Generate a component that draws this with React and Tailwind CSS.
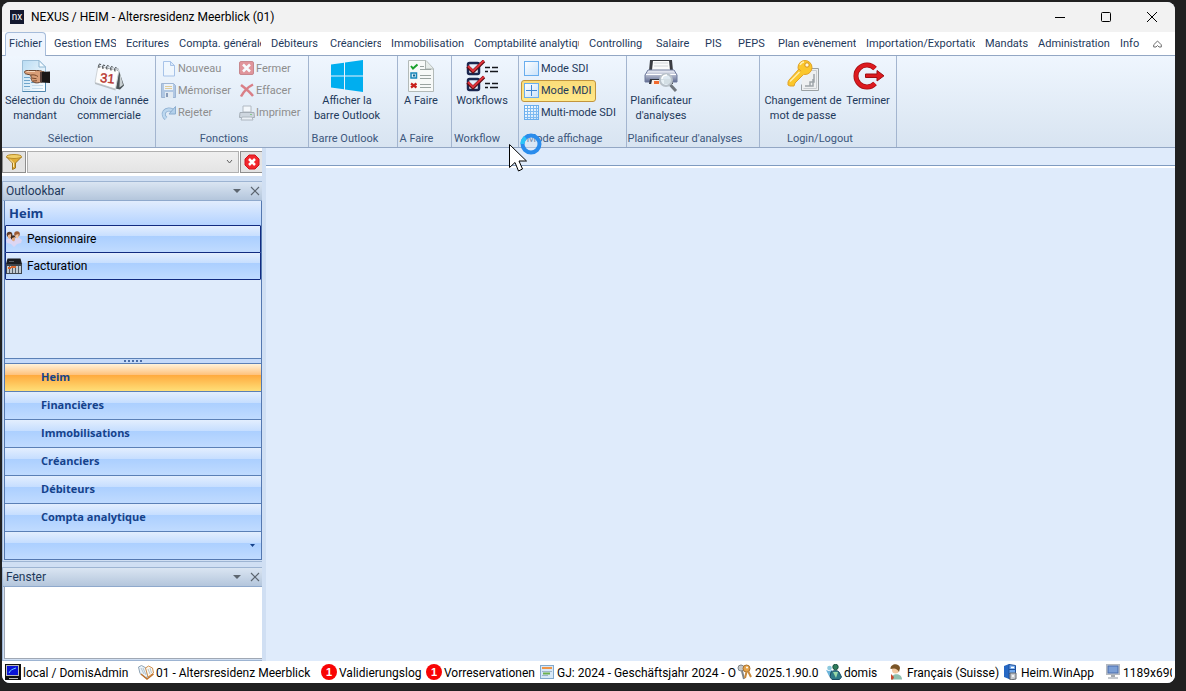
import React, { useState } from "react";
import clsx from "clsx";

const tabs = [
  { name: "Gestion EMS", width: "w-[72px]" },
  { name: "Ecritures", width: "w-[53px]" },
  { name: "Compta. générale", width: "w-[92px]" },
  { name: "Débiteurs", width: "w-[59px]" },
  { name: "Créanciers", width: "w-[61px]" },
  { name: "Immobilisations", width: "w-[83px]" },
  { name: "Comptabilité analytique", width: "w-[115px]" },
  { name: "Controlling", width: "w-[67px]" },
  { name: "Salaire", width: "w-[49px]" },
  { name: "PIS", width: "w-[33px]" },
  { name: "PEPS", width: "w-[40px]" },
  { name: "Plan evènement", width: "w-[88px]" },
  { name: "Importation/Exportation", width: "w-[119px]" },
  { name: "Mandats", width: "w-[53px]" },
  { name: "Administration", width: "w-[82px]" },
  { name: "Info", width: "w-[37px]" },
];

const navItems = [
  "Heim",
  "Financières",
  "Immobilisations",
  "Créanciers",
  "Débiteurs",
  "Compta analytique",
];

/* ---------- large ribbon icons ---------- */

function SelectClientIcon() {
  return (
    <svg width="32" height="32" viewBox="0 0 32 32">
      <defs>
        <linearGradient id="sheet" x1="0" y1="0" x2="1" y2="1">
          <stop offset="0" stopColor="#b9dcf3" />
          <stop offset="1" stopColor="#ffffff" />
        </linearGradient>
      </defs>
      <path d="M3.500 .5H20l6.500 6.500v24.500h-23z" fill="url(#sheet)" stroke="#9dbfd8" />
      <path d="M20 .5V7h6.500z" fill="#f4fbff" stroke="#8fb6d2" />
      <path d="M26.500 22v9.500h-23" fill="none" stroke="#4e86ad" />
      <path d="M5 17.500h6M5 20.500h6M5 23.500h6M5 26.500h6M12 22.500h8" stroke="#6ea5cc" />
      <path d="M13 25.500h11M13 28.500h11M5 29.500h6" stroke="#c5dcec" />
      <path d="M5.500 12c0-1.300 2-1.500 4-1.500h8c2 0 4 0 6 1l2 .5v9l-5 1.500c-2 .7-5 .5-6-.5-1.500 0-2-1-1.500-2-1-.6-1.300-1.500-.8-2.500l-.5-2.500-4.500-1c-1 0-1.700-1-1.700-2z" fill="#d99e78" stroke="#6b4630" />
      <path d="M12 15c3-.5 5 .2 7 1.500M12.500 18l5 .7M14 21l4-.3" stroke="#7a4a2c" fill="none" />
      <path d="M7.500 11.500H16" stroke="#f7d5ba" />
      <path d="M22 12l9 -.5V23l-9-.5z" fill="#1a1716" />
      <path d="M22 12v10" stroke="#5a413a" strokeWidth="2" />
    </svg>
  );
}

function CalendarIcon() {
  return (
    <svg width="32" height="32" viewBox="0 0 32 32">
      <path d="M25 8l6 17.500-4 4-4.500-1z" fill="#4a5356" />
      <path d="M27 13l3 12-3.500 2.500z" fill="#c9d0d3" />
      <path d="M5 6l21 4-3.500 19L2 22.500z" fill="#fdfdfd" stroke="#cfd4d8" />
      <path d="M2 22.500l20.500 6.500v1.500L2 24z" fill="#b7bdc2" />
      <path d="M6 6.500l19 4" stroke="#a0a5aa" strokeDasharray="2 1" />
      <path d="M6 8c-1-4 1-5 2-3M10 9c-1-4 1-5 2-3M14 9.500c-1-4 1-5 2-3M18 10.500c-1-4 1-5 2-3M22 11.500c-1-4 1-5 2-3" fill="none" stroke="#33383b" />
      <text x="7" y="22" transform="rotate(6 8 20)" className="font-['Liberation_Sans'] text-[13px]" fill="#b8322a" stroke="#b8322a" strokeWidth=".4">31</text>
    </svg>
  );
}

function WindowsIcon() {
  return (
    <svg width="32" height="32" viewBox="0 0 32 32" fill="#00aeef">
      <path d="M0 4.500L13 2.700V15.500H0zM14 2.500L32 0V15.500H14zM0 16.500H13V29.300L0 27.500zM14 16.500H32V32L14 29.500z" />
    </svg>
  );
}

function TodoIcon() {
  return (
    <svg width="32" height="32" viewBox="0 0 32 32">
      <path d="M3.500 .5H21l7.500 8v23h-25z" fill="#f7f9f8" stroke="#b3bab8" />
      <path d="M20.500 1v8h8" fill="#e6ecea" stroke="#aab2b0" />
      <path d="M6 6l2 2.500 4.500-4" fill="none" stroke="#1ba12c" strokeWidth="2" />
      <rect x="6" y="13" width="5.500" height="5" fill="#d8eefb" stroke="#1a87b9" strokeWidth="1.500" />
      <path d="M8 15.500h2" stroke="#14648c" strokeWidth="2" />
      <path d="M6 23.500l5.500 4M11.500 23.500L6 27.500" stroke="#c8201c" strokeWidth="2.200" />
      <path d="M15 6.500h4M15 9.500h11M15 15.500h11M15 18.500h11M15 24.500h11M15 27.500h11" stroke="#9aa3a0" />
    </svg>
  );
}

function WorkflowIcon() {
  return (
    <svg width="32" height="32" viewBox="0 0 32 32">
      {[0, 16].map((y) => (
        <g key={y} transform={`translate(0 ${y})`}>
          <rect x="2" y="3" width="11" height="11" rx="1.500" fill="#e7edf8" stroke="#1b2750" strokeWidth="2.500" />
          <path d="M1.500 6.500l5.500 5L18 1" fill="none" stroke="#5b0d12" strokeWidth="3.500" />
          <path d="M2 6l5 5L18 .5" fill="none" stroke="#e0333b" strokeWidth="2" />
          <path d="M19 7.500h5M26 7.500h6M19 11.500h3M24 11.500h8" stroke="#15171c" strokeWidth="1.500" />
        </g>
      ))}
    </svg>
  );
}

function PrinterSearchIcon() {
  return (
    <svg width="34" height="32" viewBox="0 0 34 32">
      <defs>
        <linearGradient id="printer" x1="0" y1="0" x2="0" y2="1">
          <stop offset="0" stopColor="#f2f4fb" />
          <stop offset="1" stopColor="#5f6b91" />
        </linearGradient>
      </defs>
      <path d="M6 0h22l1 11H5z" fill="#3b3d43" />
      <path d="M9 1h16l1 9H8z" fill="#fbfbfb" />
      <path d="M10 3h14M10 6h14" stroke="#d3d6da" />
      <path d="M4 10h26l3 5v7H1v-7z" fill="url(#printer)" stroke="#6f7a9c" />
      <path d="M2 14.500h30" stroke="#ffffff" />
      <path d="M6 19h22l1 5H5z" fill="#2f323b" />
      <path d="M8 20h12v5H7z" fill="#f7f0ea" />
      <path d="M10 21h5v3h-5z" fill="#f26a2e" />
      <circle cx="22" cy="20" r="6" fill="#e6f1f7" fillOpacity=".9" stroke="#b8c1c9" strokeWidth="2" />
      <path d="M18 19c0-3 3-4 5-4" fill="none" stroke="#ffffff" strokeWidth="1.500" />
      <path d="M26.500 25l5.500 6" stroke="#70767d" strokeWidth="3" />
    </svg>
  );
}

function KeyIcon() {
  return (
    <svg width="32" height="32" viewBox="0 0 32 32">
      <path d="M15.500 8.500h16v22h-17v-6" fill="#eef0f1" stroke="#9aa0a3" />
      <path d="M17.500 10.500h12v18h-13" fill="none" stroke="#c9cdd0" />
      <path d="M27 14v8h-4v4M18 26h8v-7" fill="none" stroke="#9ea4a8" strokeWidth="1.500" />
      <circle cx="18" cy="7.500" r="7" fill="#fbc72b" stroke="#e0a22a" />
      <circle cx="20" cy="5" r="2.200" fill="#fff8dd" stroke="#d8930e" />
      <path d="M12 9l5 5L8 23l-1 3H3l-2-1v-3l1-2z" fill="#fbc72b" stroke="#e0a22a" />
      <path d="M13 12l4 2" stroke="#fbc72b" strokeWidth="3" />
      <path d="M12.500 12L3 21.500M13 5c1-2 2-3 4-3" fill="none" stroke="#ffefae" strokeWidth="1.500" />
    </svg>
  );
}

function ExitIcon() {
  return (
    <svg width="32" height="32" viewBox="0 0 32 32">
      <path d="M23 8.500A11 11 0 1 0 23 23.500" fill="none" stroke="#a30f13" strokeWidth="5" />
      <path d="M23 8.500A11 11 0 1 0 23 23.500" fill="none" stroke="#dc1a1f" strokeWidth="3.500" />
      <path d="M13.500 14H25v-3.500l7 5.300-7 5.200v-3.500H13.500z" fill="#dc1a1f" stroke="#9c0f12" />
    </svg>
  );
}

/* ---------- small ribbon icons ---------- */

function NewIcon() {
  return (
    <svg width="16" height="16" viewBox="0 0 16 16" opacity=".6">
      <path d="M2.500 .5h7l4 4v10.500h-11z" fill="#f3f9ff" stroke="#7ba4dc" />
      <path d="M9.500 .5v4h4z" fill="#cfe2f8" stroke="#7ba4dc" />
    </svg>
  );
}

function SaveIcon() {
  return (
    <svg width="16" height="16" viewBox="0 0 16 16" opacity=".6">
      <path d="M.5 .5h12l2 2v12H.5z" fill="#8eaed6" stroke="#6f8fbc" />
      <rect x="3" y="1" width="9" height="6" fill="#eef4fb" />
      <path d="M4 3.500h7M4 5.500h7" stroke="#d9b45b" />
      <rect x="4" y="9" width="8" height="6" fill="#e2e8ef" />
      <rect x="5" y="10" width="2" height="4" fill="#4c6590" />
    </svg>
  );
}

function UndoIcon() {
  return (
    <svg width="16" height="16" viewBox="0 0 16 16" opacity=".65">
      <path d="M5 13.500C0 9 4 2 12 5.500" fill="none" stroke="#5e8cbb" strokeWidth="4" />
      <path d="M5 13.500C0 9 4 2 12 5.500" fill="none" stroke="#a9cdec" strokeWidth="2.500" />
      <path d="M14.500 1.500v7.500H8z" fill="#9bc3e6" stroke="#5e8cbb" />
    </svg>
  );
}

function CloseSmallIcon() {
  return (
    <svg width="16" height="16" viewBox="0 0 16 16" opacity=".6">
      <rect x=".5" y=".5" width="14" height="13" rx="1.500" fill="#d9575c" stroke="#b04146" />
      <path d="M4 3.500l7 7M11 3.500l-7 7" stroke="#ffffff" strokeWidth="2.500" />
    </svg>
  );
}

function DeleteIcon() {
  return (
    <svg width="16" height="16" viewBox="0 0 16 16" opacity=".6">
      <path d="M2 2c4 3 8 6 12 11M14 1.500C9 4 5 8 2 13.500" fill="none" stroke="#d2353c" strokeWidth="2.500" />
    </svg>
  );
}

function PrintIcon() {
  return (
    <svg width="16" height="16" viewBox="0 0 16 16" opacity=".6">
      <path d="M4 1h8v6H4z" fill="#ffffff" stroke="#9299a0" />
      <path d="M1 7.500h14l.5 5H.5z" fill="#c3c9d0" stroke="#7e858c" />
      <path d="M3 12h10l1 3H2z" fill="#f4f6f8" stroke="#8f969d" />
      <path d="M11 9.500h2" stroke="#50b34a" />
    </svg>
  );
}

function ModeIcon({ lines }) {
  return (
    <svg width="16" height="16" viewBox="0 0 16 16">
      <defs>
        <linearGradient id="pane" x1="0" y1="0" x2="1" y2="1">
          <stop offset="0" stopColor="#ffffff" />
          <stop offset="1" stopColor="#c9e2fa" />
        </linearGradient>
      </defs>
      <rect x=".5" y=".5" width="14" height="14" fill="url(#pane)" stroke="#6aaeee" />
      {lines === 1 && <path d="M7.500 2v11M2 7.500h11" stroke="#3f86d2" />}
      {lines === 3 && (
        <path d="M3.500 1v13M6.500 1v13M9.500 1v13M12.500 1v13M1 3.500h13M1 6.500h13M1 9.500h13M1 12.500h13" stroke="#7db9f0" />
      )}
    </svg>
  );
}

/* ---------- side bar and status icons ---------- */

function FunnelIcon() {
  return (
    <svg width="16" height="16" viewBox="0 0 16 16">
      <path d="M.5 3l6 6v6.500l3-1.500V9l6-6z" fill="#e0ac35" stroke="#9c7420" />
      <ellipse cx="8" cy="2.500" rx="7.500" ry="2" fill="#f0cf6a" stroke="#b88c2a" />
      <path d="M4 5.500l3.500 3.500v4" fill="none" stroke="#fbe9ae" />
    </svg>
  );
}

function CancelIcon() {
  return (
    <svg width="16" height="16" viewBox="0 0 16 16">
      <path d="M5 1h6l4 4v6l-4 4H5l-4-4V5z" fill="#f2262c" stroke="#d3121a" />
      <path d="M5 5l6 6M11 5l-6 6" stroke="#ffffff" strokeWidth="2.500" />
    </svg>
  );
}

function ResidentsIcon() {
  return (
    <svg width="16" height="16" viewBox="0 0 16 16">
      <path d="M0 9l3-2 5 1 4-2 4 3-1 3-4 1-3 3-3-3-4-1z" fill="#dcd6f3" />
      <circle cx="3.500" cy="3.500" r="2.800" fill="#5f3b27" />
      <path d="M2 4l3-1v3l-1 2-2-1z" fill="#e9b48d" />
      <circle cx="11" cy="3" r="2.800" fill="#9c5b34" />
      <path d="M9.500 4l3-1v3l-1 1.500-2-1z" fill="#f3c6a0" />
      <circle cx="7" cy="6.500" r="2.300" fill="#3f2a1f" />
      <path d="M6 7l3-1v3l-1 1.500-2-1z" fill="#e0a981" />
    </svg>
  );
}

function BillingIcon() {
  return (
    <svg width="16" height="16" viewBox="0 0 16 16">
      <path d="M1.500 .5h13L16 6H0z" fill="#1c1d20" />
      <path d="M3 3.500h5" stroke="#5c6066" />
      <path d="M0 6h16v10H0z" fill="#3f464d" />
      <path d="M1 8h14v7H1z" fill="#c3cbd1" />
      <path d="M3.500 8v7M6.500 8v7M9.500 8v7M12.500 8v7" stroke="#56606a" />
      <path d="M2 10h3M5 9h3M8 9h2" stroke="#d8662d" strokeWidth="2" />
    </svg>
  );
}

function TerminalIcon() {
  return (
    <svg width="16" height="16" viewBox="0 0 16 16">
      <rect width="16" height="16" fill="#111111" />
      <rect x="1" y="1" width="13" height="11" fill="#b9b9b9" />
      <rect x="2" y="2" width="11" height="9" fill="#0a14d6" />
      <path d="M4 9c1-3 4-4 7-5" stroke="#6fd0ff" fill="none" />
      <path d="M4 14.500h9" stroke="#c0c0c0" />
    </svg>
  );
}

function BookIcon() {
  return (
    <svg width="16" height="16" viewBox="0 0 16 16">
      <path d="M.5 3l3-1.500L8 4l2 9-3 .5-5-4z" fill="#eaf2f8" stroke="#8ea3b4" />
      <path d="M7.500 4l3-2 4 2 1 5-5.500 4z" fill="#fdf7ec" stroke="#cf9050" />
      <path d="M3 10l6 5 6.500-5" fill="none" stroke="#bf742f" strokeWidth="1.500" />
      <path d="M3 4l3 6M5 4l3 7M10 5l2 5M12 4l1.500 5" stroke="#b5c4cf" />
    </svg>
  );
}

function AlertBadge() {
  return (
    <svg width="16" height="16" viewBox="0 0 16 16">
      <circle cx="8" cy="8" r="8" fill="#f80404" />
      <text x="8" y="12" textAnchor="middle" className="font-['Liberation_Sans'] text-[11px] font-bold" fill="#ffffff">1</text>
    </svg>
  );
}

function FormIcon() {
  return (
    <svg width="16" height="16" viewBox="0 0 16 16">
      <rect x="1.500" y="1.500" width="13" height="13" fill="#d7e8f7" stroke="#83a9cc" />
      <path d="M3 4h10" stroke="#ef9548" strokeWidth="2" />
      <path d="M3 7.500h10M3 11.500h6" stroke="#9db5cb" />
      <path d="M4 9.500h7" stroke="#6cb04e" strokeWidth="2" />
    </svg>
  );
}

function KeysIcon() {
  return (
    <svg width="16" height="16" viewBox="0 0 16 16">
      <circle cx="4" cy="4" r="3" fill="#c3c7ca" stroke="#7f8488" />
      <path d="M5 7l2 8" stroke="#7f8488" strokeWidth="2" />
      <circle cx="9.500" cy="4.500" r="3.500" fill="#e6a44a" stroke="#a87333" />
      <path d="M9.500 8L8 14M11 7l3 6" stroke="#c98a3c" strokeWidth="2" />
      <circle cx="10" cy="3.500" r="1" fill="#fff" />
    </svg>
  );
}

function BuddiesIcon() {
  return (
    <svg width="16" height="16" viewBox="0 0 16 16">
      <circle cx="3.500" cy="4" r="2.300" fill="#8cc9de" />
      <path d="M0 6l3 1 3-1v7l-3-1z" fill="#6cb4da" />
      <circle cx="9.500" cy="3" r="2.700" fill="#2f7d5c" stroke="#1b5140" />
      <path d="M5 8c3-2 6-2 8 0l2.500 5-2 2.500H6L4 13z" fill="#2f7a86" stroke="#1c4c63" />
      <path d="M7 8l3 6 2-6" fill="#9ad9a8" />
    </svg>
  );
}

function PersonIcon() {
  return (
    <svg width="16" height="16" viewBox="0 0 16 16">
      <path d="M2 15.500c0-7 11-7 11 0z" fill="#8fbfae" />
      <circle cx="6.500" cy="6" r="3.500" fill="#f3c9a0" />
      <path d="M1.500 5c0-6 9-6 9.500-1l-1 4c-1-2-3-3.500-5-3.500z" fill="#7a5527" />
      <path d="M2 10l3 3-1 2.500H2z" fill="#ca4a2e" />
    </svg>
  );
}

function CabinetIcon() {
  return (
    <svg width="16" height="16" viewBox="0 0 16 16">
      <path d="M1 2l5-2v15l-5-2z" fill="#2668c4" />
      <path d="M6 .5l6.500 1V13L6 14.500z" fill="#6da6ec" stroke="#1c4f9b" />
      <path d="M6 5.500h6M6 9.500h4" stroke="#1c4f9b" />
      <path d="M7 9h6v6l-6 1z" fill="#c6cacf" stroke="#62676d" />
      <path d="M8 3.500h3M9 12h2" stroke="#ffffff" strokeWidth="1.500" />
    </svg>
  );
}

function MonitorIcon() {
  return (
    <svg width="16" height="16" viewBox="0 0 16 16">
      <rect x="1.500" y=".5" width="13" height="10" fill="#cdd1d6" stroke="#b4b9bf" />
      <rect x="3" y="2" width="10" height="7" fill="#7b9fd6" stroke="#4a6dab" />
      <path d="M6 11h4v2H6z" fill="#a5aab0" />
      <path d="M3 14h10" stroke="#c5c9ce" strokeWidth="2" />
    </svg>
  );
}

const statusItems = [
  { text: "local / DomisAdmin", icon: <TerminalIcon />, width: "w-[133px]" },
  { text: "01 - Altersresidenz Meerblick", icon: <BookIcon />, width: "w-[183px]" },
  { text: "Validierungslog", icon: <AlertBadge />, width: "w-[105px]" },
  { text: "Vorreservationen", icon: <AlertBadge />, width: "w-[113px]" },
  { text: "GJ: 2024 - Geschäftsjahr 2024 - O", icon: <FormIcon />, width: "w-[198px]" },
  { text: "2025.1.90.0", icon: <KeysIcon />, width: "w-[89px]" },
  { text: "domis", icon: <BuddiesIcon />, width: "w-[63px]" },
  { text: "Français (Suisse)", icon: <PersonIcon />, width: "w-[114px]" },
  { text: "Heim.WinApp", icon: <CabinetIcon />, width: "w-[102px]" },
  { text: "1189x690", icon: <MonitorIcon />, width: "w-[67px]" },
];

/* ---------- building blocks ---------- */

function RibbonGroup({ title, width, children }) {
  return (
    <section className={clsx("flex shrink-0 flex-col border-r border-[#a3b5cf] pt-[2px]", width)}>
      <div className="flex h-[73px] items-start">{children}</div>
      <h2 className="pr-4 text-center leading-4 whitespace-nowrap text-[#3b567c]">{title}</h2>
    </section>
  );
}

function BigButton({ icon, lines, width }) {
  return (
    <button className={clsx("flex shrink-0 flex-col items-center pt-[2px] leading-[15px] whitespace-nowrap", width)}>
      <span className="mb-[1px] flex h-8 items-center">{icon}</span>
      {lines.map((line) => (
        <span key={line}>{line}</span>
      ))}
    </button>
  );
}

function SmallButton({ icon, text, disabled }) {
  return (
    <button disabled={disabled} className="flex h-[22px] items-center gap-[1px] whitespace-nowrap disabled:text-[#8d8d8d]">
      {icon}
      {text}
    </button>
  );
}

function ModeButton({ lines, text, active, onClick }) {
  return (
    <button
      onClick={onClick}
      className={clsx(
        "flex h-[22px] items-center gap-[1px] rounded-[3px] border pr-1 pl-[2px] whitespace-nowrap",
        active ? "border-[#c2953d] bg-linear-to-b from-[#fbdc79] to-[#ffe98a]" : "border-transparent"
      )}
    >
      <ModeIcon lines={lines} />
      {text}
    </button>
  );
}

function PanelHeader({ title }) {
  return (
    <header className="flex h-[19px] shrink-0 items-center border-b border-[#8fa9cc] bg-linear-to-b from-[#dae5f2] to-[#b4c6dc] pl-[3px] text-[12px] text-[#1e395b]">
      <h2 className="flex-1">{title}</h2>
      <button aria-label={`Options ${title}`} className="mr-2">
        <svg width="10" height="10" viewBox="0 0 10 10">
          <path d="M1 3h8L5 7z" fill="#5d6670" />
        </svg>
      </button>
      <button aria-label={`Close ${title}`} className="mr-[2px]">
        <svg width="10" height="10" viewBox="0 0 10 10">
          <path d="M1 1l8 8M9 1L1 9" stroke="#5d6670" strokeWidth="1.200" />
        </svg>
      </button>
    </header>
  );
}

function TitleBar() {
  return (
    <header className="flex h-[30px] shrink-0 items-center bg-[#f2f2f2] pl-2">
      <span className="flex h-[14px] w-[14px] items-center justify-center bg-[#14192f] text-[10px] leading-none text-white">
        nx
      </span>
      <h1 className="ml-[7px] flex-1 text-[12px] text-black">NEXUS / HEIM - Altersresidenz Meerblick (01)</h1>
      <button aria-label="Minimize" className="flex w-[46px] justify-center">
        <svg width="10" height="10"><path d="M0 5.500h10" stroke="#000" /></svg>
      </button>
      <button aria-label="Maximize" className="flex w-[46px] justify-center">
        <svg width="10" height="10"><rect x=".5" y=".5" width="9" height="9" rx="1" fill="none" stroke="#000" /></svg>
      </button>
      <button aria-label="Close" className="flex w-[46px] justify-center">
        <svg width="10" height="10"><path d="M0 0l10 10M10 0L0 10" stroke="#000" /></svg>
      </button>
    </header>
  );
}

function Tabs() {
  return (
    <nav className="flex h-6 shrink-0 items-end border-b border-[#93a7c4] bg-white pl-[3px] text-[11px] text-[#1e395b]">
      <button className="-mb-px h-6 w-[41px] shrink-0 rounded-t-[4px] border border-b-0 border-[#a6bcda] bg-[#eff5fd] text-center whitespace-nowrap">
        Fichier
      </button>
      <div className="flex h-[23px] min-w-0 flex-1 items-center pt-px pl-2">
        {tabs.map((tab) => (
          <button key={tab.name} className={clsx("shrink-0 pr-[10px] text-left whitespace-nowrap", tab.width)}>
            <span className="block overflow-hidden">{tab.name}</span>
          </button>
        ))}
        <button aria-label="Collapse ribbon" className="-ml-1">
          <svg width="9" height="9" viewBox="0 0 9 9">
            <path d="M4.500 1L8.300 4.800V7H6L4.500 5.500 3 7H.7V4.800z" fill="none" stroke="#6d6d6d" />
          </svg>
        </button>
      </div>
    </nav>
  );
}

function Ribbon() {
  const [mode, setMode] = useState("mdi");

  return (
    <div className="flex h-[92px] shrink-0 overflow-hidden border-b border-[#93a7c4] bg-linear-to-b from-[#eff6fe] to-[#d8e4f1] text-[11px] text-[#1e395b]">
      <RibbonGroup title="Sélection" width="w-[154px]">
        <BigButton icon={<SelectClientIcon />} lines={["Sélection du", "mandant"]} width="w-[66px]" />
        <BigButton icon={<CalendarIcon />} lines={["Choix de l'année", "commerciale"]} width="w-[82px]" />
      </RibbonGroup>
      <RibbonGroup title="Fonctions" width="w-[153px]">
        <div className="grid grid-cols-[78px_auto] pl-[5px]">
          <SmallButton disabled icon={<NewIcon />} text="Nouveau" />
          <SmallButton disabled icon={<CloseSmallIcon />} text="Fermer" />
          <SmallButton disabled icon={<SaveIcon />} text="Mémoriser" />
          <SmallButton disabled icon={<DeleteIcon />} text="Effacer" />
          <SmallButton disabled icon={<UndoIcon />} text="Rejeter" />
          <SmallButton disabled icon={<PrintIcon />} text="Imprimer" />
        </div>
      </RibbonGroup>
      <RibbonGroup title="Barre Outlook" width="w-[89px]">
        <BigButton icon={<WindowsIcon />} lines={["Afficher la", "barre Outlook"]} width="w-[76px]" />
      </RibbonGroup>
      <RibbonGroup title="A Faire" width="w-[54px]">
        <BigButton icon={<TodoIcon />} lines={["A Faire"]} width="w-[46px]" />
      </RibbonGroup>
      <RibbonGroup title="Workflow" width="w-[67px]">
        <BigButton icon={<WorkflowIcon />} lines={["Workflows"]} width="w-[60px]" />
      </RibbonGroup>
      <RibbonGroup title="Mode affichage" width="w-[108px]">
        <div className="flex flex-col items-start pl-[2px]">
          <ModeButton lines={0} text="Mode SDI" active={mode === "sdi"} onClick={() => setMode("sdi")} />
          <ModeButton lines={1} text="Mode MDI" active={mode === "mdi"} onClick={() => setMode("mdi")} />
          <ModeButton lines={3} text="Multi-mode SDI" active={mode === "multi"} onClick={() => setMode("multi")} />
        </div>
      </RibbonGroup>
      <RibbonGroup title="Planificateur d'analyses" width="w-[133px]">
        <BigButton icon={<PrinterSearchIcon />} lines={["Planificateur", "d'analyses"]} width="w-[68px]" />
      </RibbonGroup>
      <RibbonGroup title="Login/Logout" width="w-[137px]">
        <BigButton icon={<KeyIcon />} lines={["Changement de", "mot de passe"]} width="w-[86px]" />
        <BigButton icon={<ExitIcon />} lines={["Terminer"]} width="w-[44px]" />
      </RibbonGroup>
    </div>
  );
}

function SideBar() {
  const [selected, setSelected] = useState("Heim");

  return (
    <aside className="flex w-[260px] shrink-0 flex-col">
      <div className="flex h-7 items-center gap-[1px] bg-white">
        <button aria-label="Filter" className="flex h-[22px] w-6 items-center justify-center border border-[#8e8e8e] bg-[#e3e3e3]">
          <FunnelIcon />
        </button>
        <div className="relative h-[22px] min-w-0 flex-1">
          <select aria-label="Filter value" className="h-full w-full appearance-none border border-[#b0b0b0] bg-linear-to-b from-[#efefef] to-[#e4e4e4]" />
          <svg className="pointer-events-none absolute top-2 right-[6px]" width="7" height="6">
            <path d="M1 1l2.500 3L6 1" fill="none" stroke="#606060" />
          </svg>
        </div>
        <button aria-label="Clear filter" className="flex h-[22px] w-[22px] items-center justify-center border border-r-0 border-[#8e8e8e] bg-[#e3e3e3]">
          <CancelIcon />
        </button>
      </div>

      <section className="mt-[5px] flex min-h-0 flex-1 flex-col border-t border-b border-l border-[#9db4d2] pb-px">
        <PanelHeader title="Outlookbar" />
        <div className="ml-px flex flex-1 flex-col border border-t-0 border-[#5478b0] bg-[#dfebfb]">
          <h3 className="h-6 bg-linear-to-b from-[#e2edfd] to-[#b4d3ff] pl-1 font-['Open_Sans'] text-[13px] leading-6 font-bold text-[#15428b]">
            Heim
          </h3>
          {[
            ["Pensionnaire", <ResidentsIcon />],
            ["Facturation", <BillingIcon />],
          ].map(([name, icon]) => (
            <button
              key={name}
              className="-mb-px flex h-7 items-center gap-[5px] rounded-[1px] border border-[#122b80] bg-[linear-gradient(#e3eefe,#c6deff_40%,#abcfff_40%,#c0dbff)] text-left text-[12px] text-black"
            >
              {icon}
              {name}
            </button>
          ))}
          <div className="flex-1" />
          <div className="flex h-[6px] items-center justify-center gap-[2px] border-t border-b border-[#5b80b6] bg-[#c4dafa]">
            {[0, 1, 2, 3, 4].map((dot) => (
              <i key={dot} className="h-[2px] w-[2px] bg-[#4a6da8]" />
            ))}
          </div>
          {navItems.map((item) => (
            <button
              key={item}
              onClick={() => setSelected(item)}
              className={clsx(
                "h-7 shrink-0 border-b border-[#5b80b6] pl-9 text-left font-['Open_Sans'] text-[11px] font-bold text-[#15428b]",
                item === selected
                  ? "bg-[linear-gradient(#fff3da,#ffc27c_40%,#ffa93c_40%,#ffdf78)]"
                  : "bg-[linear-gradient(#e3eefe,#c6deff_40%,#abcfff_40%,#c0dbff)]"
              )}
            >
              {item}
            </button>
          ))}
          <div className="flex h-[27px] shrink-0 items-center justify-end bg-[linear-gradient(#e3eefe,#c6deff_40%,#abcfff_40%,#c0dbff)] pr-[6px]">
            <button aria-label="Configure buttons">
              <svg width="5" height="3"><path d="M0 0h5L2.500 3z" fill="#15428b" /></svg>
            </button>
          </div>
        </div>
      </section>

      <section className="mt-[5px] flex h-[94px] shrink-0 flex-col border-t border-b border-l border-[#9db4d2] pb-px">
        <PanelHeader title="Fenster" />
        <div className="ml-px flex-1 border-b border-l border-[#a0a8b4] bg-white" />
      </section>
    </aside>
  );
}

function StatusBar() {
  return (
    <footer className="flex h-[22px] shrink-0 items-center overflow-hidden bg-white px-[3px] text-[12px] text-black">
      {statusItems.map((item) => (
        <div key={item.text} className={clsx("flex shrink-0 items-center gap-[2px] overflow-hidden whitespace-nowrap", item.width)}>
          <span className="shrink-0">{item.icon}</span>
          <span className="pt-px">{item.text}</span>
        </div>
      ))}
    </footer>
  );
}

function BusyCursor() {
  return (
    <svg className="pointer-events-none absolute top-[132px] left-[508px]" width="36" height="42" viewBox="0 0 36 42">
      <circle cx="23" cy="12" r="8.500" fill="#dfebfb" fillOpacity=".4" stroke="#2a8cec" strokeWidth="4" />
      <path d="M14.500 12a8.500 8.500 0 0 1 3-6.500" fill="none" stroke="#2bc4f8" strokeWidth="4" />
      <path d="M1.500 12.500v23l5.500-5 3.500 8.500 4-2-3.500-8h7.500z" fill="#ffffff" stroke="#000000" />
    </svg>
  );
}

export default function App() {
  return (
    <div className="relative min-h-screen bg-[#202020] pt-[2px] pr-[11px] pb-2 pl-[2px] font-['Roboto',sans-serif]">
      <div className="flex h-[calc(100vh-10px)] flex-col overflow-hidden rounded-lg bg-[#d0dff3]">
        <TitleBar />
        <Tabs />
        <Ribbon />
        <div className="flex min-h-0 flex-1 gap-1">
          <SideBar />
          <main className="flex min-w-0 flex-1 flex-col bg-[#dfebfb]">
            <div className="h-[18px] border-b border-[#7f9bc0]" />
            <div className="h-[2px] bg-white" />
          </main>
        </div>
        <StatusBar />
      </div>
      <BusyCursor />
    </div>
  );
}
